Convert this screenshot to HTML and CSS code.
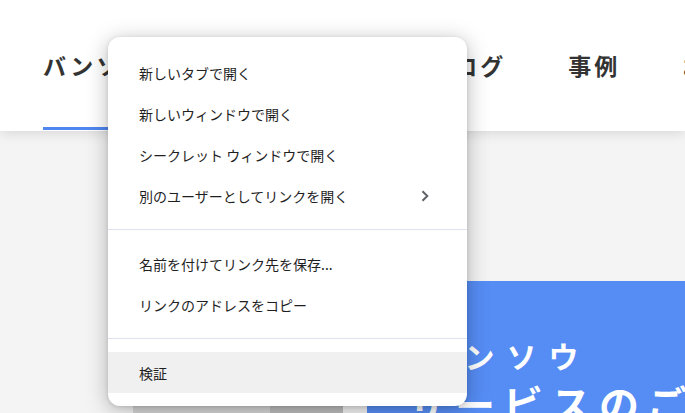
FILE: index.html
```html
<!DOCTYPE html>
<html lang="ja">
<head>
<meta charset="utf-8">
<title>バンソウ</title>
<link rel="stylesheet" href="styles.css">
</head>
<body>
<header class="site-header">
  <nav class="nav">
    <a class="nav-item is-active">バンソウとは</a>
    <a class="nav-item">サービス</a>
    <a class="nav-item">ブログ</a>
    <a class="nav-item">事例</a>
    <a class="nav-item">お問い合わせ</a>
  </nav>
</header>
<main class="main">
  <div class="left-col">
    <div class="thumb"><div class="thumb-dark"></div></div>
  </div>
  <section class="hero">
    <p class="hero-line1">バンソウ</p>
    <p class="hero-line2">サービスのご案内</p>
  </section>
</main>

<div class="context-menu">
  <div class="menu-item">新しいタブで開く</div>
  <div class="menu-item">新しいウィンドウで開く</div>
  <div class="menu-item">シークレット ウィンドウで開く</div>
  <div class="menu-item has-sub">
    <span>別のユーザーとしてリンクを開く</span>
    <svg class="chev" width="8" height="12" viewBox="0 0 8 12"><path d="M1.5 1.2 L6.3 6 L1.5 10.8" fill="none" stroke="#5f6368" stroke-width="2"/></svg>
  </div>
  <div class="menu-sep"></div>
  <div class="menu-item">名前を付けてリンク先を保存...</div>
  <div class="menu-item">リンクのアドレスをコピー</div>
  <div class="menu-sep"></div>
  <div class="menu-item is-hover">検証</div>
</div>
</body>
</html>
```
FILE: styles.css
```css
html, body {
  margin: 0;
  padding: 0;
}
body {
  width: 685px;
  height: 413px;
  overflow: hidden;
  background: #f4f4f4;
  font-family: "Noto Sans CJK JP", "Noto Sans", sans-serif;
  position: relative;
}
.site-header {
  height: 131px;
  background: #fff;
  box-shadow: 0 2px 12px rgba(0, 0, 0, 0.12);
  position: relative;
  z-index: 2;
}
.nav {
  display: flex;
  gap: 62px;
  height: 130px;
  padding-left: 43px;
  white-space: nowrap;
}
.nav-item {
  display: flex;
  align-items: center;
  box-sizing: border-box;
  height: 100%;
  padding-top: 2px;
  border-bottom: 3px solid transparent;
  font-size: 23px;
  font-weight: 700;
  letter-spacing: 3px;
  color: #333;
  flex: none;
}
.nav-item.is-active {
  border-bottom-color: #4f86ef;
}
.main {
  display: grid;
  grid-template-columns: 367px 1fr;
  height: 282px;
}
.left-col {
  padding-top: 273px;
  padding-left: 133px;
}
.thumb {
  width: 210px;
  height: 20px;
  background: #d6d6d6;
  display: flex;
  justify-content: flex-end;
}
.thumb-dark {
  width: 73px;
  background: #bdbdbd;
}
.hero {
  margin-top: 150px;
  background: #568df5;
  color: #fff;
  padding: 50px 0 0 40px;
  white-space: nowrap;
}
.hero p {
  margin: 0;
}
.hero-line1 {
  font-size: 30px;
  line-height: 48px;
  font-weight: 700;
  letter-spacing: 12px;
  margin-left: 14px !important;
}
.hero-line2 {
  font-size: 40px;
  line-height: 48px;
  font-weight: 700;
  letter-spacing: 8px;
}
.context-menu {
  position: absolute;
  left: 108px;
  top: 37px;
  width: 359px;
  box-sizing: border-box;
  padding: 15px 0 13px;
  background: #fff;
  border-radius: 12px;
  box-shadow: 0 4px 22px rgba(0, 0, 0, 0.28), 0 1px 4px rgba(0, 0, 0, 0.12);
  z-index: 10;
}
.menu-item {
  height: 41px;
  display: flex;
  align-items: center;
  justify-content: space-between;
  padding: 0 38px 0 31px;
  font-size: 14px;
  color: #1f1f1f;
  white-space: nowrap;
}
.menu-item.is-hover {
  background: #f0f0f0;
}
.chev {
  display: block;
  margin-top: 1px;
}
.menu-sep {
  height: 1px;
  background: #dde3ef;
  margin: 13px 0 13px;
}
```
